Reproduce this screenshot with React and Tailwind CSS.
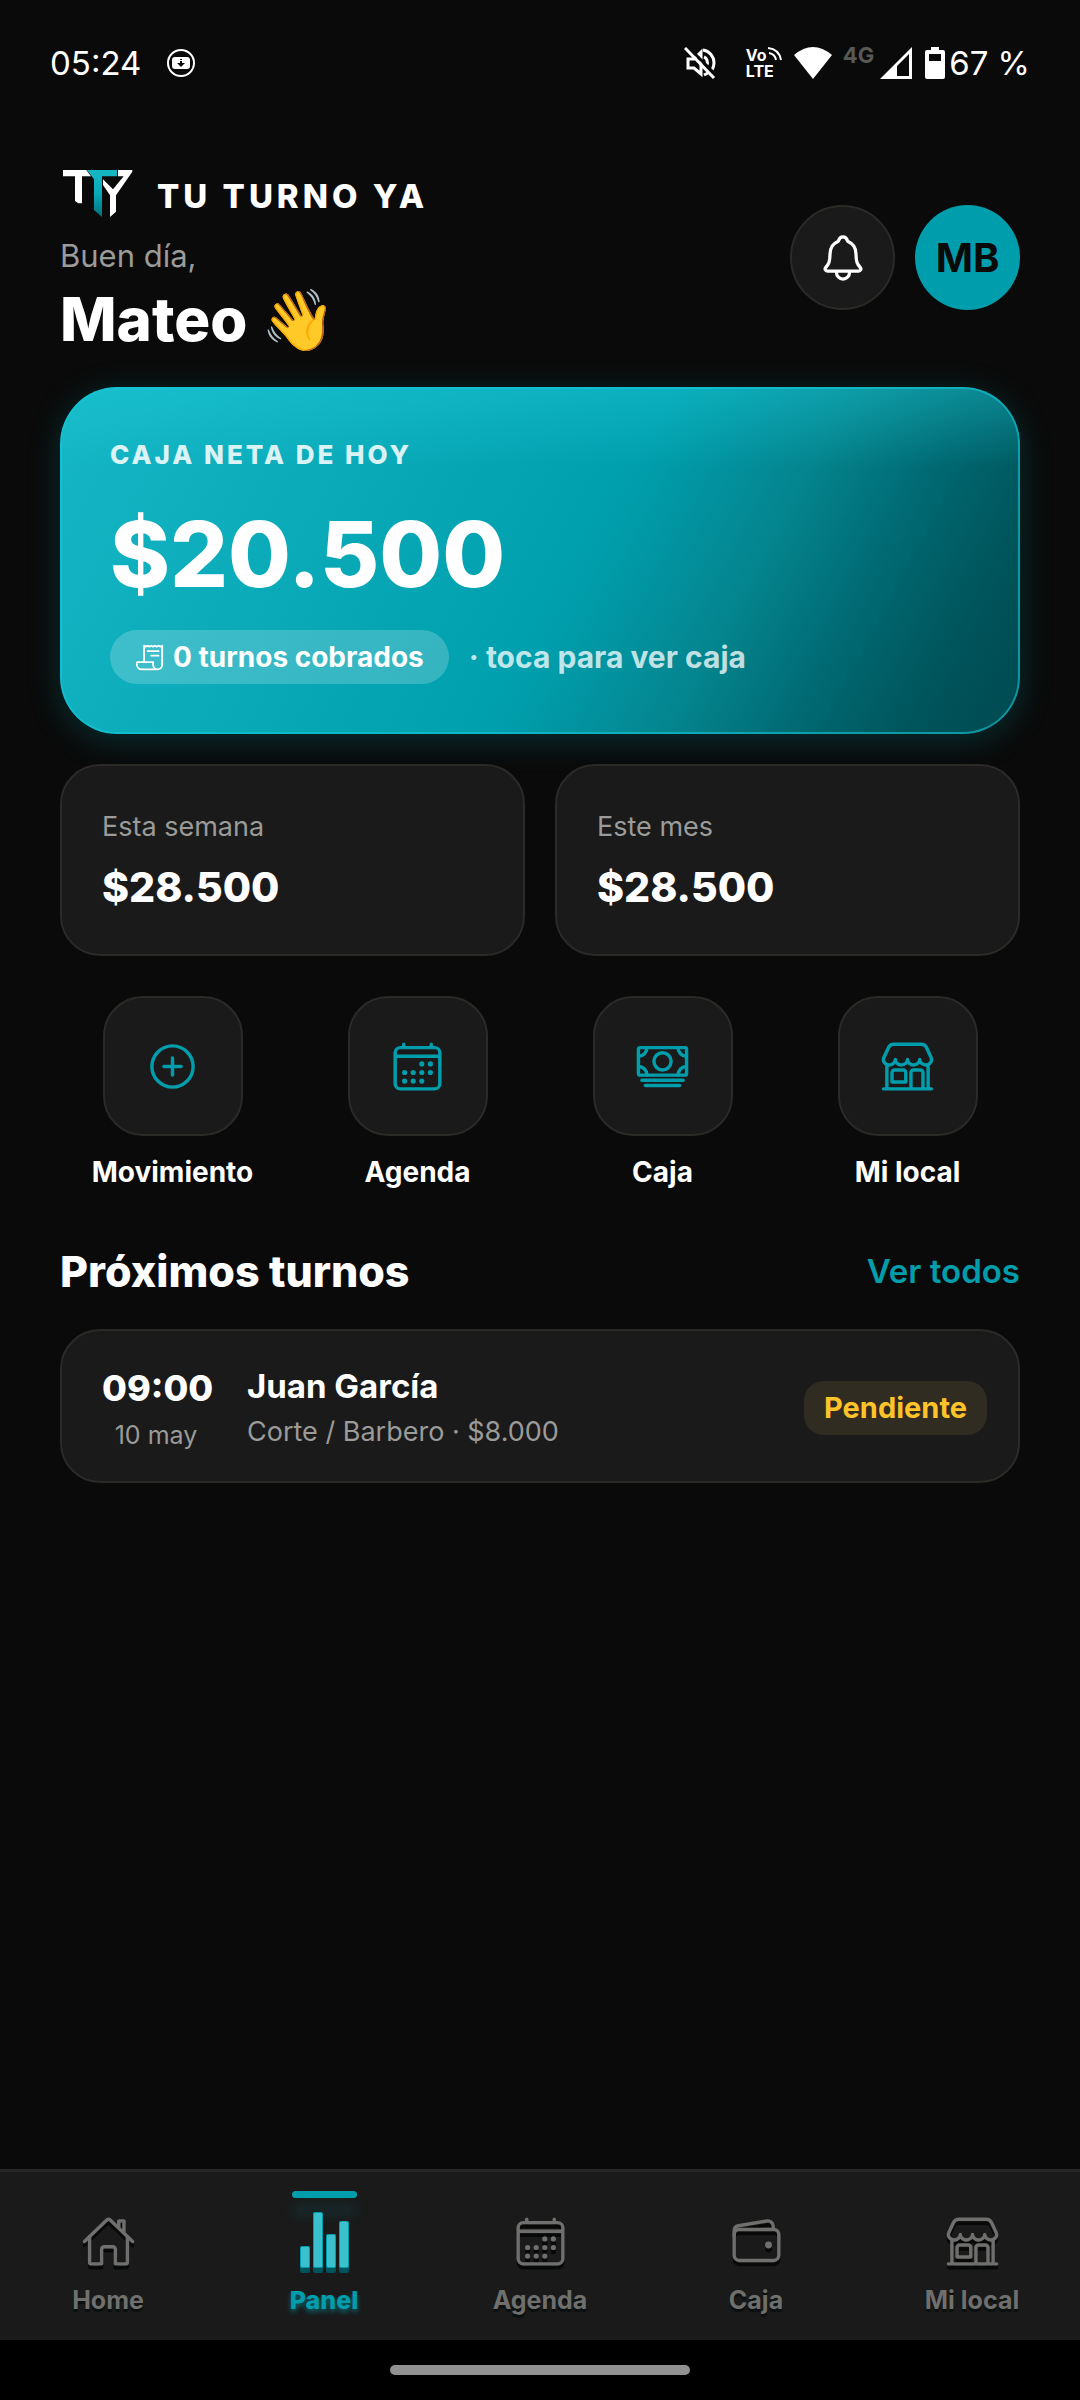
import clsx from 'clsx';
import {
    IoAddCircleOutline,
    IoCalendarOutline,
    IoCashOutline,
    IoHomeOutline,
    IoNotificationsOutline,
    IoReceiptOutline,
    IoStorefrontOutline,
    IoWalletOutline,
} from 'react-icons/io5';

const stats = [
    { label: 'Esta semana', value: '$28.500' },
    { label: 'Este mes', value: '$28.500' },
];

const actions = [
    { label: 'Movimiento', Icon: IoAddCircleOutline },
    { label: 'Agenda', Icon: IoCalendarOutline },
    { label: 'Caja', Icon: IoCashOutline },
    { label: 'Mi local', Icon: IoStorefrontOutline },
];

const tabs = [
    { label: 'Home', Icon: IoHomeOutline },
    { label: 'Panel', Icon: PanelIcon, active: true },
    { label: 'Agenda', Icon: IoCalendarOutline },
    { label: 'Caja', Icon: IoWalletOutline },
    { label: 'Mi local', Icon: IoStorefrontOutline },
];

function PanelIcon() {
    const bars = [
        [3, 32],
        [16, -2],
        [29, 20],
        [42, 7],
    ];
    return (
        <svg width="55" height="55" viewBox="0 0 55 55" className="overflow-visible">
            {bars.map(([x, y]) => (
                <g key={x}>
                    <rect x={x} y={y + 5} width="10" height={54 - y} rx="2" fill="#00525b" />
                    <rect x={x} y={y} width="10" height={54 - y} rx="2" fill="#009eac" />
                    <rect x={x + 1} y={y + 1} width="8" height={52 - y} rx="1" fill="#3bc0ce" />
                </g>
            ))}
        </svg>
    );
}

function Logo() {
    return (
        <svg width="70" height="48" viewBox="0 0 210 144">
            <defs>
                <linearGradient id="logoTeal" x1="0" y1="0" x2="0" y2="1">
                    <stop offset="0" stopColor="#17b8c6" />
                    <stop offset="0.5" stopColor="#08a9b8" />
                    <stop offset="1" stopColor="#006f79" />
                </linearGradient>
            </defs>
            <path d="M0 0H70L84 19H57V100H46L36 93V19H0Z" fill="#fff" />
            <path d="M72 0H162V19H117V141L93 120V28Z" fill="url(#logoTeal)" />
            <path d="M165 0H208V5L159 76V125L141 141V76L120 45V28L150 58L182 19H165Z" fill="#fff" />
        </svg>
    );
}

function StatusBar() {
    return (
        <div className="flex h-[126px] items-center justify-between px-[50px] text-[33px] leading-10 text-white">
            <div className="flex items-center gap-[26px]">
                <span>05:24</span>
                <svg width="28" height="28" viewBox="0 0 28 28">
                    <circle cx="14" cy="14" r="13" fill="none" stroke="#fff" strokeWidth="2" />
                    <rect x="5" y="8" width="18" height="12" rx="3" fill="#fff" />
                    <path d="M13 10h2v1h-2zM13 12h2v2h3l-4 4-4-4h3z" fill="#0a0a0a" />
                </svg>
            </div>
            <div className="flex items-center">
                <svg width="32" height="32" viewBox="0 0 32 32" fill="none" stroke="#fff" strokeWidth="3">
                    <path d="M4 12h6l7-7v22l-7-6H4z" />
                    <path d="M19 3c6 1 11 6 11 13 0 3-1 5-2 7M20 10c3 1 4 5 3 8M20 28l4-2" />
                    <path d="M4 0L33 29" stroke="#0a0a0a" />
                    <path d="M1 1L30 31" />
                </svg>
                <div className="relative ml-[30px] w-[36px] text-[16px] leading-4 font-bold">
                    <p>Vo</p>
                    <p>LTE</p>
                    <svg width="14" height="14" viewBox="0 0 14 14" className="absolute top-0 right-0">
                        <path d="M1 6q6 1 7 7M0 1q11 1 13 12" fill="none" stroke="#fff" strokeWidth="2" />
                    </svg>
                </div>
                <svg width="38" height="32" viewBox="0 0 38 32" className="ml-[12px]">
                    <path d="M0 8Q19-8 38 8L19 32Z" fill="#fff" />
                </svg>
                <span className="ml-[11px] mb-4 text-[22px] leading-6 font-bold text-[#585856]">4G</span>
                <svg width="32" height="32" viewBox="0 0 32 32" className="ml-[6px]">
                    <path d="M0 32L32 0V32ZM17 19V29H29V7Z" fill="#fff" fillRule="evenodd" />
                </svg>
                <svg width="20" height="32" viewBox="0 0 20 32" className="ml-[13px]">
                    <path d="M6 0h8v3h4a2 2 0 0 1 2 2v25a2 2 0 0 1-2 2H2a2 2 0 0 1-2-2V5a2 2 0 0 1 2-2h4zM4 7v7h12V7z" fill="#fff" fillRule="evenodd" />
                </svg>
                <span className="ml-[4px]">67 %</span>
            </div>
        </div>
    );
}

export default function App() {
    return (
        <div className="flex min-h-screen flex-col bg-[#0a0a0a] font-['Inter',sans-serif] text-white">
            <StatusBar />

            <main className="flex-1 px-[60px] pt-[38px]">
                {/* Header */}
                <header className="flex items-center justify-between">
                    <div>
                        <div className="flex h-[54px] items-end gap-[24px] pl-[3px]">
                            <Logo />
                            <span className="text-[33px] leading-[44px] font-extrabold tracking-[4px]">TU TURNO YA</span>
                        </div>
                        <p className="mt-[18px] text-[31px] leading-10 text-[#9b9b99]">Buen día,</p>
                        <h1 className="mt-[11px] text-[60px] leading-[64px] font-extrabold">Mateo 👋</h1>
                    </div>
                    <div className="flex gap-[20px]">
                        <button
                            type="button"
                            aria-label="Notificaciones"
                            className="flex size-[105px] items-center justify-center rounded-full border-2 border-[#2b2a27] bg-[#1a1a1a]"
                        >
                            <IoNotificationsOutline size={52} />
                        </button>
                        <button
                            type="button"
                            className="size-[105px] rounded-full bg-[#009eac] text-[40px] font-bold text-[#0a0a0a]"
                        >
                            MB
                        </button>
                    </div>
                </header>

                {/* Caja del día */}
                <a
                    href="#caja"
                    className="mt-[36px] block rounded-[57px] border-2 border-[#14c8d7]/60 bg-[linear-gradient(180deg,rgba(34,211,224,0.32),rgba(34,211,224,0)_80px),linear-gradient(118deg,#15b6c5,#009fae_54%,#04858f_69%,#006770_81%,#00535a_91%,#004a50)] bg-origin-border p-[48px] shadow-[0_6px_32px_rgba(0,158,172,0.25)]"
                >
                    <p className="text-[26px] leading-9 font-extrabold tracking-[3px] text-white/85">CAJA NETA DE HOY</p>
                    <p className="mt-[25px] text-[91px] leading-[112px] font-extrabold">$20.500</p>
                    <div className="mt-[20px] flex items-center gap-[20px] leading-[54px] font-bold">
                        <span className="flex h-[54px] items-center gap-[9px] rounded-full bg-white/20 px-[25px] text-[28px]">
                            <IoReceiptOutline size={29} />
                            0 turnos cobrados
                        </span>
                        <span className="text-[30px] text-white/75">· toca para ver caja</span>
                    </div>
                </a>

                {/* Totales */}
                <div className="mt-[30px] grid grid-cols-2 gap-[30px]">
                    {stats.map(({ label, value }) => (
                        <div key={label} className="rounded-[40px] border-2 border-[#2b2a27] bg-[#1a1a1a] px-[40px] py-[41px]">
                            <p className="text-[27px] leading-10 text-[#9b9b99]">{label}</p>
                            <p className="mt-[14px] text-[41px] leading-[52px] font-extrabold">{value}</p>
                        </div>
                    ))}
                </div>

                {/* Accesos rápidos */}
                <div className="mt-[40px] grid grid-cols-4 gap-[20px]">
                    {actions.map(({ label, Icon }) => (
                        <button key={label} type="button" className="flex flex-col items-center gap-[18px]">
                            <span className="flex size-[140px] items-center justify-center rounded-[40px] border-2 border-[#2b2a27] bg-[#1a1a1a] text-[#009eac]">
                                <Icon size={55} />
                            </span>
                            <span className="text-[28px] leading-9 font-bold">{label}</span>
                        </button>
                    ))}
                </div>

                {/* Próximos turnos */}
                <div className="mt-[55px] flex items-center justify-between">
                    <h2 className="text-[43px] leading-[52px] font-extrabold">Próximos turnos</h2>
                    <a href="#turnos" className="text-[33px] leading-10 font-semibold text-[#009eac]">Ver todos</a>
                </div>
                <article className="mt-[32px] flex items-center rounded-[40px] border-2 border-[#2b2a27] bg-[#1a1a1a] pt-[34px] pr-[31px] pb-[30px] pl-[40px]">
                    <div className="w-[108px] text-center">
                        <p className="text-[36px] leading-[46px] font-extrabold">09:00</p>
                        <p className="mt-[8px] text-[25px] leading-8 text-[#9b9b99]">10 may</p>
                    </div>
                    <div className="ml-[37px] flex-1">
                        <p className="text-[33px] leading-10 font-bold">Juan García</p>
                        <p className="mt-[8px] text-[27px] leading-9 text-[#9b9b99]">Corte / Barbero · $8.000</p>
                    </div>
                    <span className="flex h-[54px] items-center rounded-[20px] bg-[#312c22] px-[20px] text-[29px] leading-9 font-bold text-[#fec328]">
                        Pendiente
                    </span>
                </article>
            </main>

            <nav className="grid grid-cols-5 border-t-3 border-[#282725] bg-[#1a1a1a] pt-[19px] pb-[25px]">
                {tabs.map(({ label, Icon, active }) => (
                    <a
                        key={label}
                        href={`#${label}`}
                        className={clsx('flex flex-col items-center', active ? 'text-[#009eac]' : 'text-[#6f6f6d]')}
                    >
                        <span
                            className={clsx(
                                'h-[7px] w-[65px] rounded-full',
                                active && 'bg-[#009eac] shadow-[0_16px_14px_rgba(0,158,172,0.22)]'
                            )}
                        />
                        <span className={clsx('mt-[16px] size-[55px]', !active && 'drop-shadow-[0_4px_0_#070909]')}>
                            <Icon size={55} />
                        </span>
                        <span
                            className={clsx(
                                'mt-[16px] text-[25px] leading-[30px]',
                                active
                                    ? 'font-extrabold text-shadow-[0_3px_5px_rgba(0,158,172,0.6)]'
                                    : 'font-bold text-shadow-[0_3px_1px_#0a0f0f]'
                            )}
                        >
                            {label}
                        </span>
                    </a>
                ))}
            </nav>

            <div className="flex h-[60px] items-center justify-center bg-black">
                <div className="h-[10px] w-[300px] rounded-full bg-[#919191]" />
            </div>
        </div>
    );
}
